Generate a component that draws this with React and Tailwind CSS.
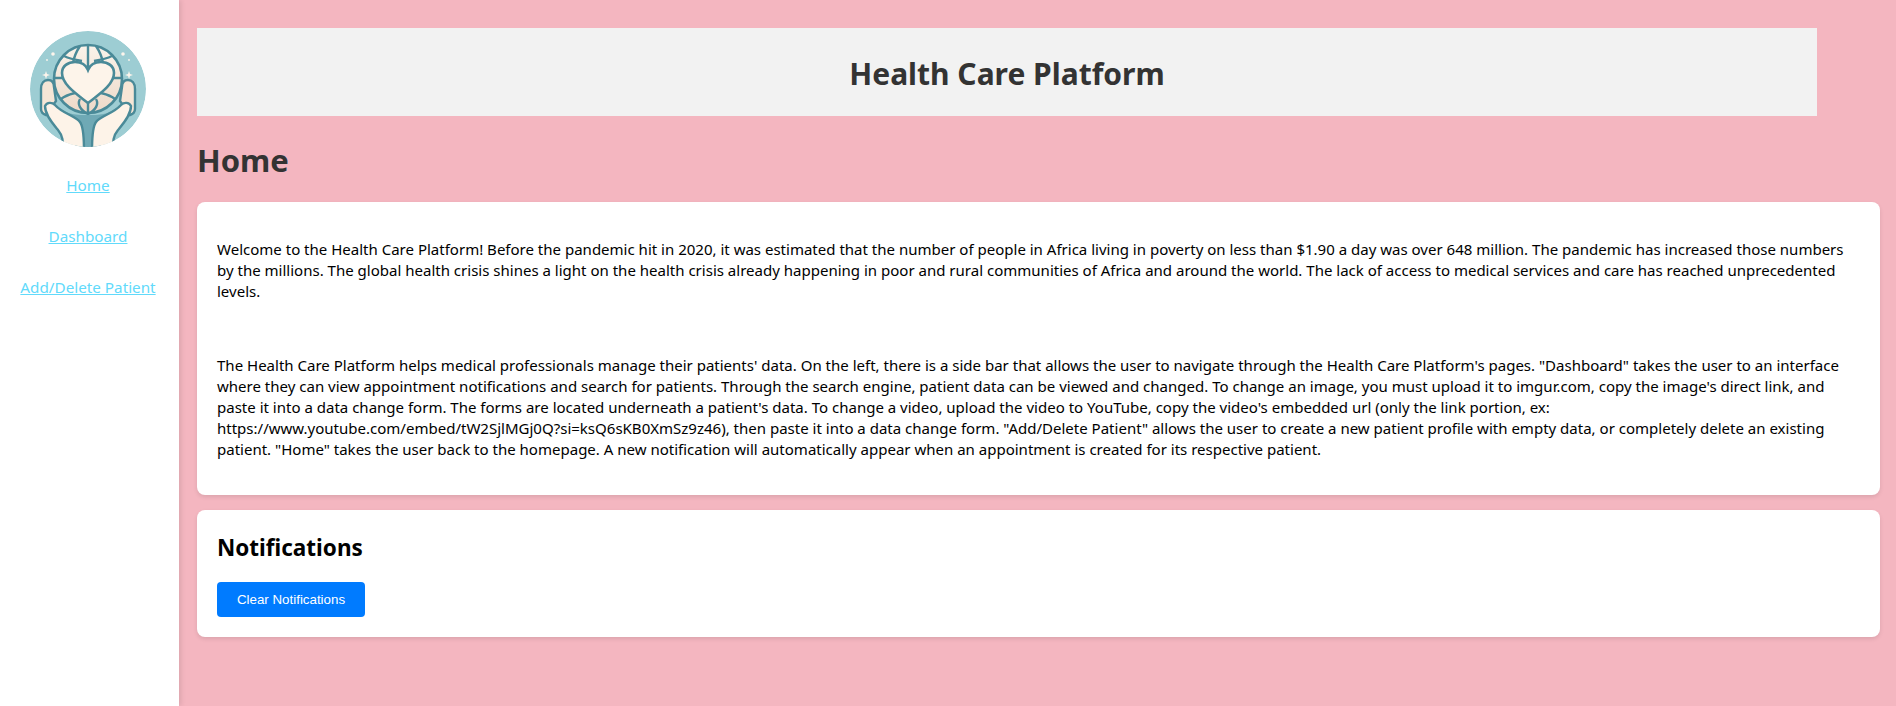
const links = ["Home", "Dashboard", "Add/Delete Patient"];

const Logo = () => (
  <svg viewBox="0 0 116 116" className="w-[116px] h-[116px]">
    <defs>
      <clipPath id="logoClip">
        <circle cx="58" cy="58" r="58" />
      </clipPath>
      <linearGradient id="globeFill" x1="0" y1="0" x2="0" y2="1">
        <stop offset="0" stopColor="#faf3ea" />
        <stop offset="1" stopColor="#edd9c8" />
      </linearGradient>
    </defs>
    <g clipPath="url(#logoClip)">
      <circle cx="58" cy="58" r="58" fill="#9dcdd3" />
      {/* sparkles */}
      <circle cx="23" cy="23" r="1.8" fill="#fdf5ec" />
      <circle cx="93" cy="23" r="1.8" fill="#fdf5ec" />
      <circle cx="17" cy="29" r="0.9" fill="#fdf5ec" />
      <circle cx="99" cy="29" r="0.9" fill="#fdf5ec" />
      <path d="M16 40 L17 43 L20 44 L17 45 L16 48 L15 45 L12 44 L15 43 Z" fill="#fdf5ec" />
      <path d="M99 40 L100 43 L103 44 L100 45 L99 48 L98 45 L95 44 L98 43 Z" fill="#fdf5ec" />
      {/* centre band under the globe */}
      <path d="M22 70 C34 84 44 84 58 84 C72 84 82 84 94 70 L70 116 H46 Z" fill="#6fa9b5" />
      {/* globe */}
      <circle cx="58" cy="48" r="34" fill="url(#globeFill)" stroke="#4a8a98" strokeWidth="2.6" />
      <g fill="none" stroke="#4a8a98" strokeWidth="2.4">
        <path d="M58 14 V36" />
        <path d="M50 15 C46 21 44 26 43 32" />
        <path d="M66 15 C70 21 72 26 73 32" />
        <path d="M34 25 C40 28 46 29 52 30" />
        <path d="M82 25 C76 28 70 29 64 30" />
        <path d="M24 47 H34" />
        <path d="M82 47 H92" />
        <path d="M31 68 C36 64 41 63 45 62" />
        <path d="M85 68 C80 64 75 63 71 62" />
        <path d="M50 68 C47 73 50 79 58 83 C66 79 69 73 66 68" />
        <path d="M58 72 V83" />
      </g>
      {/* heart */}
      <path
        d="M58 72 C48 64 32 54 32 42 C32 35 38 31 45 31 C51 31 56 34 58 39 C60 34 65 31 71 31 C78 31 84 35 84 42 C84 54 68 64 58 72 Z"
        fill="#fdf4ea"
        stroke="#4a8a98"
        strokeWidth="2.6"
      />
      {/* hands */}
      <path
        d="M11 78 V58 C11 52 14 49 18 49 C22 49 24 52 24 56 L26 70 L16 84 C13 83 11 81 11 78 Z"
        fill="#f6e6d6"
        stroke="#4a8a98"
        strokeWidth="2.4"
      />
      <path
        d="M105 78 V58 C105 52 102 49 98 49 C94 49 92 52 92 56 L90 70 L100 84 C103 83 105 81 105 78 Z"
        fill="#f6e6d6"
        stroke="#4a8a98"
        strokeWidth="2.4"
      />
      <path
        d="M15 75 C17 71 22 71 25 74 C33 83 46 85 50 91 C53 95 54 102 54 120 H33 C33 110 33 105 28 99 C23 93 15 84 15 75 Z"
        fill="#fdf3e8"
        stroke="#4a8a98"
        strokeWidth="2.4"
      />
      <path
        d="M101 75 C99 71 94 71 91 74 C83 83 70 85 66 91 C63 95 62 102 62 120 H83 C83 110 83 105 88 99 C93 93 101 84 101 75 Z"
        fill="#fdf3e8"
        stroke="#4a8a98"
        strokeWidth="2.4"
      />
    </g>
  </svg>
);

export default function App() {
  return (
    <div className="flex min-h-[706px] bg-[#f4b6c0] text-black font-['Noto_Sans',sans-serif]">
      <aside className="w-[179px] shrink-0 bg-white shadow-[2px_0_5px_rgba(0,0,0,0.1)] flex flex-col items-center pt-[31px] pr-[3px]">
        <Logo />
        <nav className="flex flex-col items-center gap-[29px] mt-[27px]">
          {links.map((l) => (
            <a key={l} href="#" className="text-[#61dafb] underline text-[15.25px] leading-[22px]">
              {l}
            </a>
          ))}
        </nav>
      </aside>
      <main className="flex-1 pl-[18px] pr-4 pt-[28px]">
        <header className="w-[1620px] h-[88px] pt-[3px] bg-[#f2f2f2] flex items-center justify-center">
          <h1 className="text-[30px] font-bold text-[#333] leading-[40px]">Health Care Platform</h1>
        </header>
        <h2 className="text-[31px] font-bold text-[#333] mt-[22px] mb-[20px] leading-[44px]">Home</h2>
        <section className="bg-white rounded-lg shadow-[0_2px_4px_rgba(0,0,0,0.1)] h-[293px] px-5 pt-[37px] text-[15.03px] leading-[21px] whitespace-nowrap">
          <p>
            Welcome to the Health Care Platform! Before the pandemic hit in 2020, it was estimated that the number of people in Africa living in poverty on less than $1.90 a day was over 648 million. The pandemic has increased those numbers
            <br />
            by the millions. The global health crisis shines a light on the health crisis already happening in poor and rural communities of Africa and around the world. The lack of access to medical services and care has reached unprecedented
            <br />
            levels.
          </p>
          <p className="mt-[53px]">
            The Health Care Platform helps medical professionals manage their patients' data. On the left, there is a side bar that allows the user to navigate through the Health Care Platform's pages. "Dashboard" takes the user to an interface
            <br />
            where they can view appointment notifications and search for patients. Through the search engine, patient data can be viewed and changed. To change an image, you must upload it to imgur.com, copy the image's direct link, and
            <br />
            paste it into a data change form. The forms are located underneath a patient's data. To change a video, upload the video to YouTube, copy the video's embedded url (only the link portion, ex:
            <br />
            https://www.youtube.com/embed/tW2SjlMGj0Q?si=ksQ6sKB0XmSz9z46), then paste it into a data change form. "Add/Delete Patient" allows the user to create a new patient profile with empty data, or completely delete an existing
            <br />
            patient. "Home" takes the user back to the homepage. A new notification will automatically appear when an appointment is created for its respective patient.
          </p>
        </section>
        <section className="bg-white rounded-lg shadow-[0_2px_4px_rgba(0,0,0,0.1)] h-[127px] mt-[15px] px-5 pt-[22px]">
          <h3 className="text-[22.5px] font-bold leading-[32px]">Notifications</h3>
          <button className="block mt-[18px] w-[148px] h-[35px] rounded bg-[#007bff] text-white text-[13.33px] font-medium font-['Liberation_Sans',sans-serif]">
            Clear Notifications
          </button>
        </section>
      </main>
    </div>
  );
}
